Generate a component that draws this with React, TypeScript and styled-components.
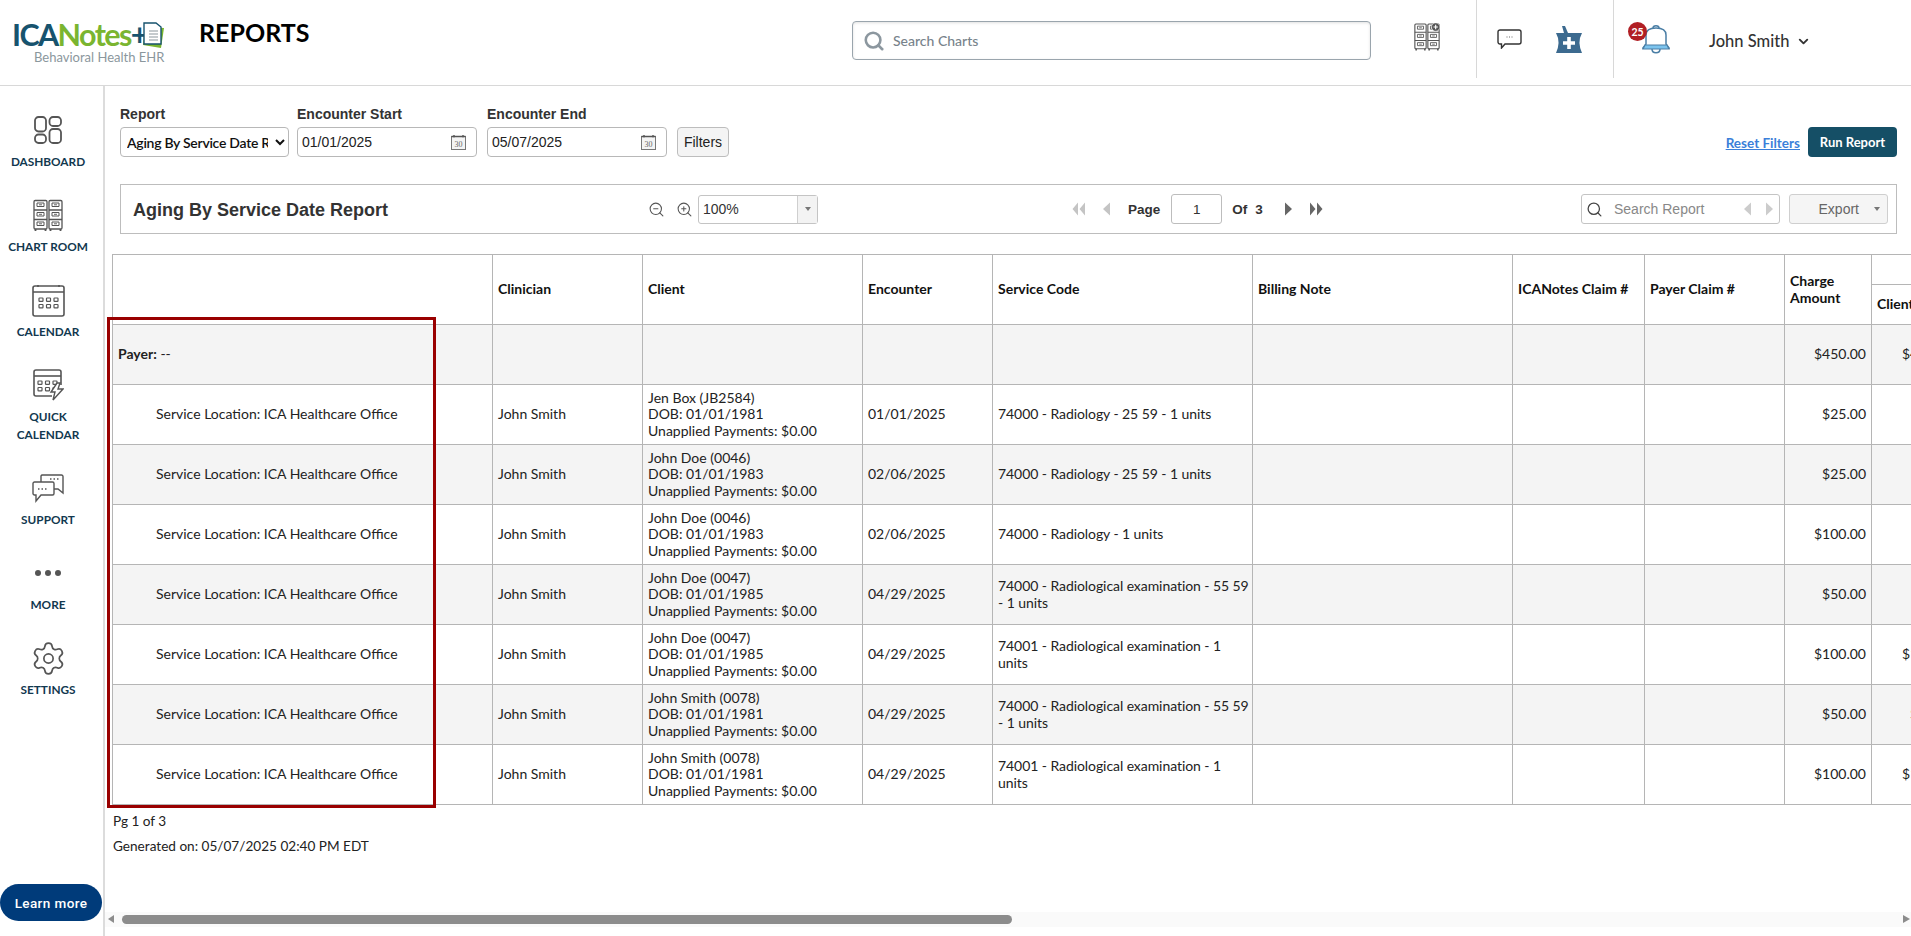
import React from "react";
import styled, { createGlobalStyle } from "styled-components";
import { Search, Settings, ZoomIn, ZoomOut, ChevronDown } from "lucide-react";

const Global = createGlobalStyle`
  html, body { margin: 0; padding: 0; height: 100%; overflow: hidden; background: #fff; }
  body { font-family: Lato, "Liberation Sans", sans-serif; color: #222; }
  #root { height: 100%; }
  * { box-sizing: border-box; }
`;

const Page = styled.div`
  width: 1911px;
  height: 936px;
  display: flex;
  flex-direction: column;
  overflow: hidden;
`;

const Header = styled.header`
  flex: 0 0 86px;
  display: flex;
  align-items: center;
  border-bottom: 1px solid #d8d8d8;
  padding-left: 12px;
`;

const Logo = styled.div`
  width: 151px;
  height: 46px;
  display: flex;
  flex-direction: column;
  flex-shrink: 0;
  margin-top: -1px;
`;
const LogoTop = styled.div`
  display: flex;
  align-items: center;
  height: 30px;
  font-size: 30.5px;
  font-weight: 700;
  letter-spacing: -1.6px;
  line-height: 30px;
`;
const Ica = styled.span`color: #17536e;`;
const Notes = styled.span`color: #7ab530;`;
const LogoDoc = styled.svg`
  flex-shrink: 0;
  margin-left: -6px;
  margin-top: 2px;
`;
const LogoSub = styled.div`
  font-size: 13px;
  line-height: 16px;
  color: #8b979d;
  padding-left: 22px;
  white-space: nowrap;
`;

const Title = styled.h1`
  margin: -21px 0 0 36px;
  width: 653px;
  flex-shrink: 0;
  font-size: 25px;
  line-height: 30px;
  font-weight: 700;
  color: #000;
`;

const ChartSearch = styled.div`
  width: 519px;
  height: 39px;
  flex-shrink: 0;
  border: 1px solid #9aa5ad;
  border-radius: 4px;
  box-shadow: inset 0 1px 3px rgba(0,0,0,.12);
  display: flex;
  align-items: center;
  gap: 8px;
  padding-left: 10px;
  margin-top: -4px;
  font-size: 14px;
  font-weight: 500;
  color: #78838b;
`;

const AddChart = styled.div`
  width: 105px;
  flex-shrink: 0;
  display: flex;
  justify-content: flex-end;
  padding-right: 36px;
  margin-top: -11px;
`;

const HeadSection = styled.div<{ $w: number }>`
  width: ${(p) => p.$w}px;
  height: 78px;
  margin-top: -7px;
  flex-shrink: 0;
  border-left: 1px solid #d8d8d8;
  display: flex;
  align-items: center;
  position: relative;
`;

const ChatIcon = styled.svg`margin-left: 20px;`;
const MortarIcon = styled.svg`margin-left: 34px;`;
const BellIcon = styled.svg`margin-left: 28px;`;

const Badge = styled.span`
  position: absolute;
  left: 14px;
  top: 22px;
  width: 19px;
  height: 19px;
  border-radius: 50%;
  background: #b11f24;
  color: #fff;
  font-size: 10.5px;
  font-weight: 700;
  display: flex;
  align-items: center;
  justify-content: center;
`;

const UserName = styled.div`
  display: flex;
  align-items: center;
  gap: 7px;
  margin-left: 39px;
  padding-top: 4px;
  font-size: 16.5px;
  font-weight: 500;
  color: #333;
`;

const Body = styled.div`
  flex: 1;
  display: flex;
  min-height: 0;
`;

const Sidebar = styled.nav`
  flex: 0 0 105px;
  border-right: 2px solid #dcdcdc;
  display: flex;
  flex-direction: column;
  align-items: center;
  padding: 26px 0 15px;
  gap: 26px;
  position: relative;
`;

const NavItem = styled.div`
  width: 100%;
  display: flex;
  flex-direction: column;
  align-items: center;
  gap: 5px;
  padding-right: 7px;
`;
const NavIcon = styled.div`
  height: 36px;
  display: flex;
  align-items: center;
  justify-content: center;
`;
const NavLabel = styled.div`
  font-size: 11.8px;
  line-height: 18px;
  font-weight: 700;
  color: #12384f;
  text-align: center;
`;

const LearnMore = styled.button`
  position: absolute;
  left: 0;
  bottom: 15px;
  width: 102px;
  height: 37px;
  border: 0;
  border-radius: 19px;
  background: #003b7a;
  color: #fff;
  font-family: Roboto, sans-serif;
  font-size: 13.5px;
  font-weight: 500;
  letter-spacing: .4px;
`;

const Main = styled.main`
  flex: 1;
  min-width: 0;
  display: flex;
  flex-direction: column;
  overflow: hidden;
`;

const FilterRow = styled.div`
  display: flex;
  align-items: flex-end;
  padding: 19px 14px 0 15px;
`;
const Field = styled.div<{ $mr: number }>`
  display: flex;
  flex-direction: column;
  gap: 4px;
  margin-right: ${(p) => p.$mr}px;
`;
const FieldLabel = styled.label`
  font-family: "Liberation Sans", sans-serif;
  font-size: 14px;
  line-height: 18px;
  font-weight: 700;
  color: #333;
`;
const ReportSelect = styled.select`
  width: 169px;
  height: 30px;
  border: 1px solid #b8b8b8;
  border-radius: 4px;
  background: #fff;
  color: #111;
  font-family: Lato, sans-serif;
  font-size: 14px;
  font-weight: 600;
  letter-spacing: -.28px;
  padding: 0 4px 0 2px;
`;
const DateBox = styled.div`
  width: 180px;
  height: 30px;
  border: 1px solid #b8b8b8;
  border-radius: 4px;
  display: flex;
  align-items: center;
  justify-content: space-between;
  padding: 0 10px 0 4px;
  font-family: "Liberation Sans", sans-serif;
  font-size: 14px;
  color: #222;
`;
const FiltersButton = styled.button`
  width: 52px;
  height: 30px;
  border: 1px solid #bdbdbd;
  border-radius: 4px;
  background: #f4f4f4;
  font-family: "Liberation Sans", sans-serif;
  font-size: 14px;
  color: #222;
  padding: 0;
`;
const Spacer = styled.div`flex: 1;`;
const ResetLink = styled.a`
  font-size: 13.5px;
  font-weight: 700;
  color: #3b7fd9;
  text-decoration: underline;
  line-height: 30px;
  margin: 0 8px -1px 0;
`;
const RunButton = styled.button`
  width: 89px;
  height: 30px;
  border: 0;
  border-radius: 4px;
  background: #154f66;
  color: #fff;
  font-family: Lato, sans-serif;
  font-size: 13px;
  font-weight: 700;
  padding: 0;
`;

const Toolbar = styled.div`
  margin: 27px 14px 0 15px;
  height: 50px;
  border: 1px solid #bdbdbd;
  display: flex;
  align-items: center;
  font-family: "Liberation Sans", sans-serif;
`;
const ReportTitle = styled.div`
  width: 527px;
  padding-left: 12px;
  padding-top: 2px;
  flex-shrink: 0;
  font-size: 18px;
  font-weight: 700;
  color: #333;
`;
const ZoomIcons = styled.div`
  display: flex;
  align-items: center;
  gap: 11px;
  width: 50px;
  color: #555;
`;
const ZoomSelect = styled.div`
  width: 120px;
  height: 29px;
  border: 1px solid #c4c4c4;
  border-radius: 3px;
  display: flex;
  align-items: stretch;
  font-size: 14px;
  color: #333;
  margin-right: 254px;
`;
const ZoomValue = styled.div`
  flex: 1;
  padding-left: 4px;
  display: flex;
  align-items: center;
`;
const ZoomCaret = styled.div`
  width: 20px;
  background: #f3f3f3;
  border-left: 1px solid #cfcfcf;
  display: flex;
  align-items: center;
  justify-content: center;
`;
const Caret = styled.span`
  width: 0;
  height: 0;
  border-left: 3px solid transparent;
  border-right: 3px solid transparent;
  border-top: 4px solid #777;
`;
const Pager = styled.div`
  width: 509px;
  flex-shrink: 0;
  display: flex;
  align-items: center;
  font-size: 13.5px;
  font-weight: 700;
  color: #333;
`;
const PagerIcons = styled.span<{ $mr: number }>`
  display: inline-flex;
  margin-right: ${(p) => p.$mr}px;
`;
const PageInput = styled.div`
  width: 51px;
  height: 30px;
  border: 1px solid #bdbdbd;
  border-radius: 3px;
  display: flex;
  align-items: center;
  justify-content: center;
  font-weight: 400;
  margin: 0 10px 0 11px;
`;
const OfText = styled.span`margin-right: 8px;`;
const ThreeText = styled.span`margin-right: 21px;`;
const ReportSearch = styled.div`
  width: 199px;
  height: 30px;
  border: 1px solid #c4c4c4;
  border-radius: 3px;
  display: flex;
  align-items: center;
  padding: 0 5px 0 4px;
  font-size: 14px;
  color: #888;
  margin-right: 9px;
  flex-shrink: 0;
`;
const SearchText = styled.span`
  flex: 1;
  padding-left: 11px;
`;
const ExportButton = styled.div`
  width: 99px;
  height: 30px;
  border: 1px solid #cfcfcf;
  border-radius: 3px;
  background: #f5f5f5;
  display: flex;
  align-items: center;
  justify-content: flex-end;
  gap: 15px;
  padding-right: 7px;
  font-size: 14px;
  color: #666;
  flex-shrink: 0;
`;

const TableArea = styled.div`
  position: relative;
  margin-top: 20px;
  padding-left: 7px;
`;
const Highlight = styled.div`
  position: absolute;
  left: 2px;
  top: 63px;
  width: 329px;
  height: 491px;
  border: 3px solid #990000;
  pointer-events: none;
`;
const ReportTable = styled.table`
  table-layout: fixed;
  border-collapse: collapse;
  width: 1847px;
  font-size: 14px;
  line-height: 16.5px;
  color: #222;
`;
const Th = styled.th<{ $h?: number }>`
  border: 1px solid #b5b5b5;
  padding: 0 5px;
  text-align: left;
  vertical-align: middle;
  font-weight: 700;
  color: #111;
  height: ${(p) => p.$h ?? 30}px;
`;
const Row = styled.tr<{ $shade: boolean }>`
  background: ${(p) => (p.$shade ? "#f4f4f4" : "#fff")};
`;
const Td = styled.td<{ $right?: boolean; $indent?: boolean }>`
  border: 1px solid #b5b5b5;
  height: 60px;
  padding: 0 ${(p) => (p.$right ? "5px" : "0")} 0 ${(p) => (p.$indent ? "43px" : "5px")};
  text-align: ${(p) => (p.$right ? "right" : "left")};
  vertical-align: middle;
`;
const CodeText = styled.span`
  letter-spacing: -.07px;
`;

const Footer = styled.div`
  padding: 8px 0 0 8px;
  font-size: 13.6px;
  color: #222;
`;
const FooterLine = styled.div`
  line-height: 16px;
  margin-bottom: 9px;
`;

const ScrollTrack = styled.div`
  margin-top: auto;
  margin-bottom: 9px;
  height: 15px;
  background: #fafafa;
  display: flex;
  align-items: center;
  position: relative;
  padding-left: 17px;
`;
const ScrollThumb = styled.div`
  width: 890px;
  height: 9px;
  border-radius: 5px;
  background: #8c8c8c;
`;
const ScrollArrow = styled.span<{ $side: "left" | "right" }>`
  position: absolute;
  top: 3px;
  ${(p) => (p.$side === "left" ? "left: 3px;" : "right: 1px;")}
  width: 0;
  height: 0;
  border-top: 4.5px solid transparent;
  border-bottom: 4.5px solid transparent;
  ${(p) => (p.$side === "left" ? "border-right: 6px solid #8c8c8c;" : "border-left: 7px solid #8c8c8c;")}
`;

const Cabinets = ({ w, h, plus }: { w: number; h: number; plus?: boolean }) => (
  <svg width={w} height={h} viewBox="0 0 30 32" fill="none" stroke="#555" strokeWidth="1.3">
    {[1, 16].map((x) => (
      <g key={x}>
        <rect x={x} y="1" width="13" height="28.500" rx="1.200" />
        <path d={`M${x} 10.500H${x + 13}M${x} 20H${x + 13}`} />
        {[3.500, 13, 22.500].map((y) => (
          <g key={y}>
            <path d={`M${x + 3} ${y + 3.500}V${y}H${x + 10}V${y + 3.500}Z`} strokeWidth="1" />
            <path d={`M${x + 5} ${y + 1.800}h3`} strokeWidth=".9" />
          </g>
        ))}
        <path d={`M${x + 1.500} 29.500v2M${x + 11.500} 29.500v2`} strokeWidth="1.800" />
      </g>
    ))}
    {plus && (
      <g>
        <circle cx="25" cy="4.500" r="4.800" fill="#555" stroke="#fff" strokeWidth=".6" />
        <path d="M25 2v5M22.500 4.500h5" stroke="#fff" strokeWidth="1.300" />
      </g>
    )}
  </svg>
);

const CalendarDots = ({ cols, rows }: { cols: number; rows: number }) => (
  <>
    {Array.from({ length: rows }).flatMap((_, r) =>
      Array.from({ length: cols }).map((__, c) => (
        <rect key={`${r}-${c}`} x={5.500 + c * 7.500} y={11.500 + r * 6.500} width="4" height="3.400" rx=".6" strokeWidth="1.200" />
      ))
    )}
  </>
);

const Tri = ({ dir, color, double }: { dir: "l" | "r"; color: string; double?: boolean }) => (
  <svg width={double ? 14 : 9} height="14" viewBox={double ? "0 0 14 14" : "0 0 9 14"} fill={color}>
    {dir === "l" ? (
      double ? (
        <path d="M6 .5V13.500L0.500 7ZM13 .5V13.500L7.500 7Z" />
      ) : (
        <path d="M8 .5V13.500L1 7Z" />
      )
    ) : double ? (
      <path d="M1 .5V13.500L6.500 7ZM8 .5V13.500L13.500 7Z" />
    ) : (
      <path d="M1 .5V13.500L8 7Z" />
    )}
  </svg>
);

const SmallCal = () => (
  <svg width="15" height="15" viewBox="0 0 15 15" fill="none" stroke="#777">
    <rect x=".5" y="1.500" width="14" height="13" fill="#f4f4f4" />
    <path d="M.5 1.500h14M3 0v2.500M12 0v2.500" strokeWidth="1.400" stroke="#555" />
    <text x="7.500" y="12" textAnchor="middle" fontSize="8" fontFamily="Liberation Serif, serif" fill="#666" stroke="none">30</text>
  </svg>
);

const services: { client: string[]; enc: string; code: string; amt: string; client2?: string }[] = [
  { client: ["Jen Box (JB2584)", "DOB: 01/01/1981"], enc: "01/01/2025", code: "74000 - Radiology - 25 59 - 1 units", amt: "$25.00" },
  { client: ["John Doe (0046)", "DOB: 01/01/1983"], enc: "02/06/2025", code: "74000 - Radiology - 25 59 - 1 units", amt: "$25.00" },
  { client: ["John Doe (0046)", "DOB: 01/01/1983"], enc: "02/06/2025", code: "74000 - Radiology - 1 units", amt: "$100.00" },
  { client: ["John Doe (0047)", "DOB: 01/01/1985"], enc: "04/29/2025", code: "74000 - Radiological examination - 55 59 - 1 units", amt: "$50.00" },
  { client: ["John Doe (0047)", "DOB: 01/01/1985"], enc: "04/29/2025", code: "74001 - Radiological examination - 1 units", amt: "$100.00", client2: "$100.00" },
  { client: ["John Smith (0078)", "DOB: 01/01/1981"], enc: "04/29/2025", code: "74000 - Radiological examination - 55 59 - 1 units", amt: "$50.00", client2: "$50.00" },
  { client: ["John Smith (0078)", "DOB: 01/01/1981"], enc: "04/29/2025", code: "74001 - Radiological examination - 1 units", amt: "$100.00", client2: "$100.00" },
];

const colWidths = [380, 150, 220, 130, 260, 260, 132, 140, 87, 88];

export default function App() {
  return (
    <Page>
      <Global />
      <Header>
        <Logo>
          <LogoTop>
            <Ica>ICA</Ica>
            <Notes>Notes</Notes>
            <Ica>+</Ica>
            <LogoDoc width="24" height="27" viewBox="0 0 24 27">
              <path d="M4 5 23 6 20 26 2 23Z" fill="#7ab530" />
              <path d="M3 1H15L20 5V22H3Z" fill="#fff" stroke="#17536e" strokeWidth="1.400" />
              <path d="M8 9h9M8 12h9M8 15h9M8 18h9" stroke="#8b979d" strokeWidth="1" />
            </LogoDoc>
          </LogoTop>
          <LogoSub>Behavioral Health EHR</LogoSub>
        </Logo>
        <Title>REPORTS</Title>
        <ChartSearch>
          <Search size={22} color="#8c979f" strokeWidth={2.8} />
          Search Charts
        </ChartSearch>
        <AddChart>
          <Cabinets w={26} h={28} plus />
        </AddChart>
        <HeadSection $w={137}>
          <ChatIcon width="25" height="20" viewBox="0 0 25 20" fill="none">
            <path d="M3 1H22A2 2 0 0 1 24 3V13A2 2 0 0 1 22 15H8L4.500 19V15H3A2 2 0 0 1 1 13V3A2 2 0 0 1 3 1Z" stroke="#333" strokeWidth="1.400" />
            <path d="M9.500 8h1M12 8h1M14.500 8h1" stroke="#666" />
          </ChatIcon>
          <MortarIcon width="26" height="27" viewBox="0 0 26 27">
            <path d="M6 0 9 0 12 7H8Z" fill="#3c6a8f" />
            <path d="M0 7H26Q21 16 26 27H0Q5 16 0 7Z" fill="#3c6a8f" />
            <path d="M11.200 11h3.600v4.200H19v3.600h-4.200V23h-3.600v-4.200H7v-3.600h4.200Z" fill="#fff" />
          </MortarIcon>
        </HeadSection>
        <HeadSection $w={297}>
          <BellIcon width="28" height="29" viewBox="0 0 28 29" fill="none">
            <path d="M1 23H27L24 19V10C24 5 20 3 14 3S4 5 4 10V19Z" fill="#fff" stroke="#4a7ea5" strokeWidth="1.500" />
            <path d="M1 24H27L25 20H3Z" fill="#7cc4ee" stroke="#4a7ea5" strokeWidth="1.200" />
            <path d="M11 3C11 0 17 0 17 3M10 24C10 29 18 29 18 24" stroke="#4a7ea5" strokeWidth="1.500" />
          </BellIcon>
          <Badge>25</Badge>
          <UserName>
            John Smith
            <ChevronDown size={15} strokeWidth={3} color="#333" />
          </UserName>
        </HeadSection>
      </Header>
      <Body>
        <Sidebar>
          <NavItem>
            <NavIcon>
              <svg width="28" height="28" viewBox="0 0 28 28" fill="none" stroke="#555" strokeWidth="1.800">
                <rect x="1" y="1" width="11" height="14.500" rx="3.500" />
                <rect x="15.500" y="1" width="11.500" height="9" rx="3.500" />
                <rect x="1" y="18.500" width="11" height="8.500" rx="3.500" />
                <rect x="15.500" y="13" width="11.500" height="14" rx="3.500" />
              </svg>
            </NavIcon>
            <NavLabel>DASHBOARD</NavLabel>
          </NavItem>
          <NavItem>
            <NavIcon>
              <Cabinets w={30} h={33} />
            </NavIcon>
            <NavLabel>CHART ROOM</NavLabel>
          </NavItem>
          <NavItem>
            <NavIcon>
              <svg width="33" height="33" viewBox="0 0 33 33" fill="none" stroke="#555" strokeWidth="1.600">
                <rect x="1" y="2" width="31" height="30" rx="2" />
                <path d="M1 8H32M6 1v2M27 1v2" />
                <g transform="translate(1.500 2.500)"><CalendarDots cols={3} rows={2} /></g>
              </svg>
            </NavIcon>
            <NavLabel>CALENDAR</NavLabel>
          </NavItem>
          <NavItem>
            <NavIcon>
              <svg width="31" height="32" viewBox="0 0 31 32" fill="none" stroke="#555" strokeWidth="1.600">
                <path d="M19 27H3A2 2 0 0 1 1 25V3A2 2 0 0 1 3 1H26A2 2 0 0 1 28 3V16" />
                <path d="M1 7H28" />
                <g transform="translate(-.500 .500)"><CalendarDots cols={3} rows={2} /></g>
                <path d="M24 14 18 23H22L20 31 30 20H25L27 14Z" fill="#fff" strokeWidth="1.400" />
              </svg>
            </NavIcon>
            <NavLabel>QUICK<br />CALENDAR</NavLabel>
          </NavItem>
          <NavItem>
            <NavIcon>
              <svg width="32" height="29" viewBox="0 0 32 29" fill="none" stroke="#555" strokeWidth="1.400">
                <path d="M9 8V2A1.500 1.500 0 0 1 10.500 1H29.500A1.500 1.500 0 0 1 31 2.500V19L26 15H22" />
                <path d="M2.500 8H20.500A1.500 1.500 0 0 1 22 9.500V19.500A1.500 1.500 0 0 1 20.500 21H9L4 27V21H2.500A1.500 1.500 0 0 1 1 19.500V9.500A1.500 1.500 0 0 1 2.500 8Z" fill="#fff" />
                <path d="M18 5h1.500M21.500 5h1.500M25 5h1.500M6 15h1.500M9.500 15H11M13 15h1.500" />
              </svg>
            </NavIcon>
            <NavLabel>SUPPORT</NavLabel>
          </NavItem>
          <NavItem>
            <NavIcon>
              <svg width="26" height="6" viewBox="0 0 26 6" fill="#555">
                <circle cx="3" cy="3" r="3" />
                <circle cx="13" cy="3" r="3" />
                <circle cx="23" cy="3" r="3" />
              </svg>
            </NavIcon>
            <NavLabel>MORE</NavLabel>
          </NavItem>
          <NavItem>
            <NavIcon>
              <Settings size={37} strokeWidth={1.1} color="#555" />
            </NavIcon>
            <NavLabel>SETTINGS</NavLabel>
          </NavItem>
          <LearnMore>Learn more</LearnMore>
        </Sidebar>
        <Main>
          <FilterRow>
            <Field $mr={8}>
              <FieldLabel>Report</FieldLabel>
              <ReportSelect defaultValue="aging">
                <option value="aging">Aging By Service Date Report</option>
              </ReportSelect>
            </Field>
            <Field $mr={10}>
              <FieldLabel>Encounter Start</FieldLabel>
              <DateBox>01/01/2025<SmallCal /></DateBox>
            </Field>
            <Field $mr={10}>
              <FieldLabel>Encounter End</FieldLabel>
              <DateBox>05/07/2025<SmallCal /></DateBox>
            </Field>
            <FiltersButton>Filters</FiltersButton>
            <Spacer />
            <ResetLink>Reset Filters</ResetLink>
            <RunButton>Run Report</RunButton>
          </FilterRow>
          <Toolbar>
            <ReportTitle>Aging By Service Date Report</ReportTitle>
            <ZoomIcons>
              <ZoomOut size={17} strokeWidth={1.5} />
              <ZoomIn size={17} strokeWidth={1.5} />
            </ZoomIcons>
            <ZoomSelect>
              <ZoomValue>100%</ZoomValue>
              <ZoomCaret><Caret /></ZoomCaret>
            </ZoomSelect>
            <Pager>
              <PagerIcons $mr={16}><Tri dir="l" color="#c4c4c4" double /></PagerIcons>
              <PagerIcons $mr={17}><Tri dir="l" color="#c4c4c4" /></PagerIcons>
              Page
              <PageInput>1</PageInput>
              <OfText>Of</OfText>
              <ThreeText>3</ThreeText>
              <PagerIcons $mr={16}><Tri dir="r" color="#666" /></PagerIcons>
              <PagerIcons $mr={0}><Tri dir="r" color="#666" double /></PagerIcons>
            </Pager>
            <ReportSearch>
              <Search size={17} color="#444" strokeWidth={1.8} />
              <SearchText>Search Report</SearchText>
              <PagerIcons $mr={13}><Tri dir="l" color="#ccc" /></PagerIcons>
              <PagerIcons $mr={0}><Tri dir="r" color="#ccc" /></PagerIcons>
            </ReportSearch>
            <ExportButton>Export<Caret /></ExportButton>
          </Toolbar>
          <TableArea>
            <ReportTable>
              <colgroup>
                {colWidths.map((w, i) => <col key={i} width={w} />)}
              </colgroup>
              <thead>
                <tr>
                  <Th rowSpan={2} />
                  <Th rowSpan={2}>Clinician</Th>
                  <Th rowSpan={2}>Client</Th>
                  <Th rowSpan={2}>Encounter</Th>
                  <Th rowSpan={2}>Service Code</Th>
                  <Th rowSpan={2}>Billing Note</Th>
                  <Th rowSpan={2}>ICANotes Claim #</Th>
                  <Th rowSpan={2}>Payer Claim #</Th>
                  <Th rowSpan={2}>Charge Amount</Th>
                  <Th />
                </tr>
                <tr>
                  <Th $h={40}>Client</Th>
                </tr>
              </thead>
              <tbody>
                <Row $shade>
                  <Td><strong>Payer:</strong> --</Td>
                  <Td /><Td /><Td /><Td /><Td /><Td /><Td />
                  <Td $right>$450.00</Td>
                  <Td $right>$450.00</Td>
                </Row>
                {services.map((s, i) => (
                  <Row key={i} $shade={i % 2 === 1}>
                    <Td $indent>Service Location: ICA Healthcare Office</Td>
                    <Td>John Smith</Td>
                    <Td>
                      {s.client[0]}<br />{s.client[1]}<br />Unapplied Payments: $0.00
                    </Td>
                    <Td>{s.enc}</Td>
                    <Td><CodeText>{s.code}</CodeText></Td>
                    <Td /><Td /><Td />
                    <Td $right>{s.amt}</Td>
                    <Td $right>{s.client2 ?? ""}</Td>
                  </Row>
                ))}
              </tbody>
            </ReportTable>
            <Highlight />
          </TableArea>
          <Footer>
            <FooterLine>Pg 1 of 3</FooterLine>
            <FooterLine>Generated on: 05/07/2025 02:40 PM EDT</FooterLine>
          </Footer>
          <ScrollTrack>
            <ScrollArrow $side="left" />
            <ScrollThumb />
            <ScrollArrow $side="right" />
          </ScrollTrack>
        </Main>
      </Body>
    </Page>
  );
}
